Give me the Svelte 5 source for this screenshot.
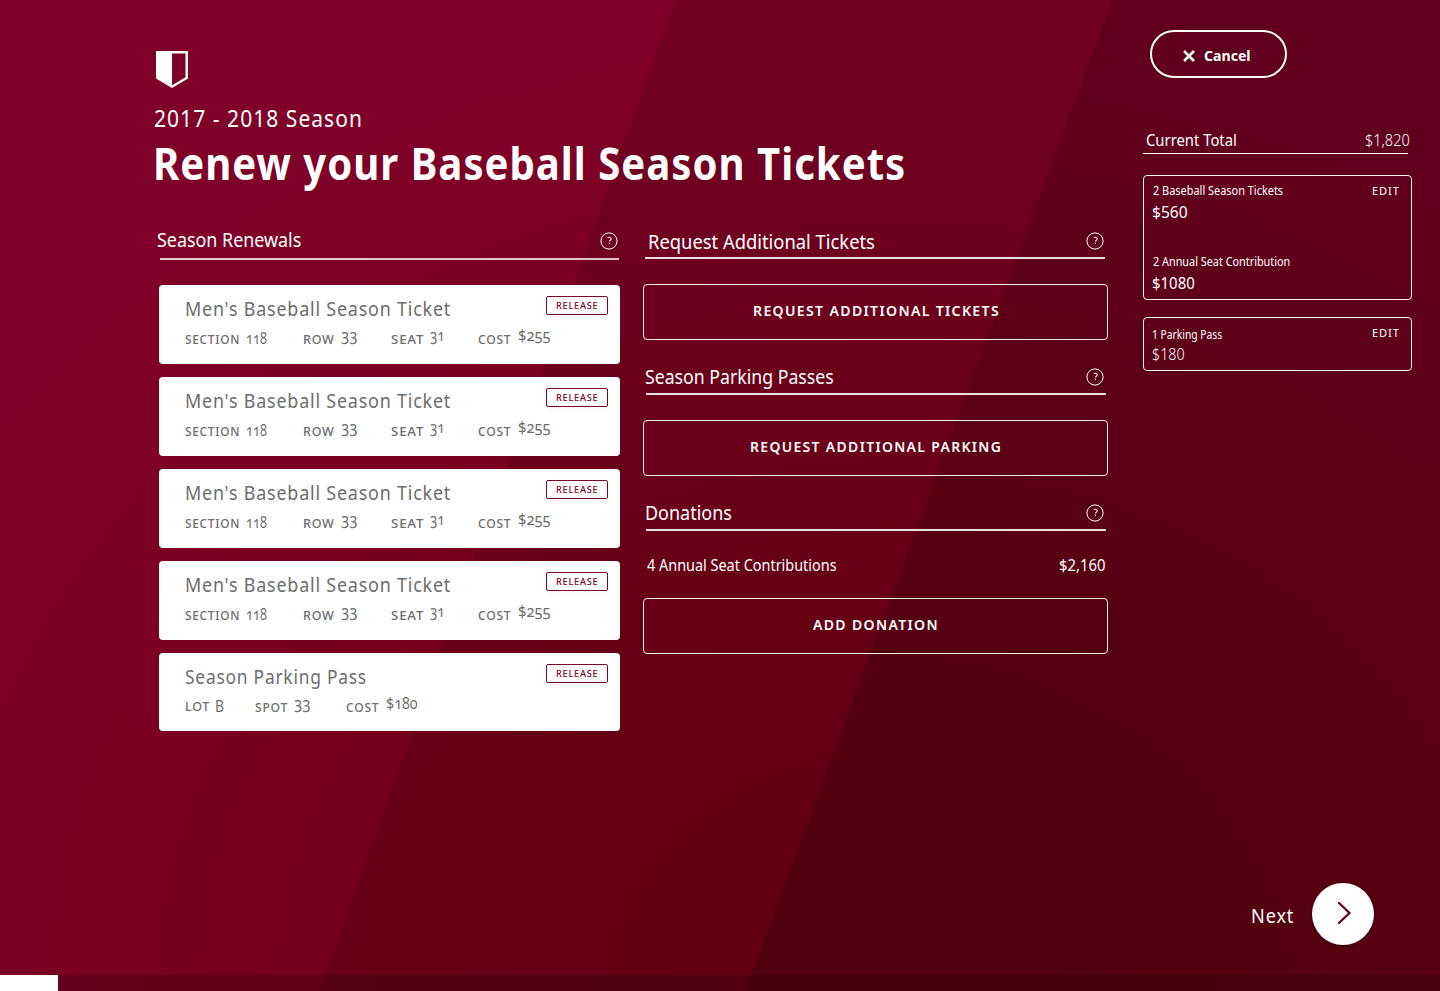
<script>
  const seat = {
    title: "Men's Baseball Season Ticket", width: 264.5,
    fields: [
      { label: 'SECTION', lw: 54, value: '118', vw: 21, raise: 1.2, size: 118 },
      { label: 'ROW', lw: 30.5, value: '33', vw: 16.5, raise: 4, size: 88 },
      { label: 'SEAT', lw: 31.5, value: '31', vw: 15, raise: 4, size: 87 },
      { label: 'COST', lw: 32.5, value: '$255', vw: 32.5, raise: 4, size: 90 }
    ]
  };
  const parking = {
    title: 'Season Parking Pass', width: 181,
    fields: [
      { label: 'LOT', lw: 23.5, value: 'B', vw: 9.2, raise: 0.5, size: 70, lift: true },
      { label: 'SPOT', lw: 32, value: '33', vw: 16.5, raise: 4, size: 91 },
      { label: 'COST', lw: 32.5, value: '$180', vw: 32, raise: 3.6, size: 90 }
    ]
  };
  const cards = [seat, seat, seat, seat, parking];

  // Narrows a line of text to the width of its box.
  function fit(node) {
    const spacing = parseFloat(getComputedStyle(node).letterSpacing) || 0;
    const scale = node.parentNode.clientWidth / (node.offsetWidth - spacing);
    node.style.transform = `scaleX(${scale})`;
  }
</script>

{#snippet t(text, width, kind)}
  <span class="t {kind}" style="width:{width}px"><span class="run" use:fit>{text}</span></span>
{/snippet}

{#snippet help()}
  <svg class="help" width="18" height="18" viewBox="0 0 18 18" fill="none" stroke="#fff">
    <circle cx="9" cy="9" r="8.1" stroke-width="1" />
    <path d="M7.6 5.7c.9-.7 3.6-.6 3.6 1.1 0 1.5-1.7 1.4-1.7 2.7M9.4 10.8v1.2" stroke-width="1.05" />
  </svg>
{/snippet}

<div class="page">
  <svg class="bands" width="1440" height="991" aria-hidden="true">
    <path d="M675 0H1440V991H319Z" fill="#000" fill-opacity=".1" />
    <path d="M1112 0H1440V991H745Z" fill="#000" fill-opacity=".14" />
  </svg>

  <div class="body">
    <main>
      <header>
        <svg class="logo" width="32" height="37" viewBox="0 0 32 37">
          <path d="M0 0H32V27.5L16 37L0 27.5Z" fill="#fff" />
          <path d="M16 2.6H29.5V26.2L16 34.2Z" fill="#7c0027" />
        </svg>
        <div class="season">{@render t('2017 - 2018 Season', 207.5, 'sub')}</div>
        <h1>{@render t('Renew your Baseball Season Tickets', 752, 'title')}</h1>
      </header>

      <div class="columns">
        <section class="renewals">
          <div class="sec first">{@render t('Season Renewals', 144, 'h')}{@render help()}</div>
          {#each cards as card}
            <article class:short={card === parking}>
              <div class="info">
                {@render t(card.title, card.width, 'ct')}
                <div class="fields">
                  {#each card.fields as f}
                    <div class="field" class:lift={f.lift} style="width:{f.size}px">
                      {@render t(f.label, f.lw, 'lab')}
                      <span style="margin-bottom:{f.raise}px">{@render t(f.value, f.vw, 'val')}</span>
                    </div>
                  {/each}
                </div>
              </div>
              <button class="release">{@render t('RELEASE', 41.5, 'rel')}</button>
            </article>
          {/each}
        </section>

        <section class="extras">
          <div class="sec request">{@render t('Request Additional Tickets', 226.5, 'h')}{@render help()}</div>
          <button class="wide">{@render t('REQUEST ADDITIONAL TICKETS', 246, 'btn')}</button>
          <div class="sec">{@render t('Season Parking Passes', 189, 'h')}{@render help()}</div>
          <button class="wide">{@render t('REQUEST ADDITIONAL PARKING', 250.5, 'btn')}</button>
          <div class="sec">{@render t('Donations', 86.5, 'h')}{@render help()}</div>
          <div class="donation">
            {@render t('4 Annual Seat Contributions', 190, 'm')}
            {@render t('$2,160', 46, 'm')}
          </div>
          <button class="wide add">{@render t('ADD DONATION', 124.5, 'btn')}</button>
        </section>
      </div>
    </main>

    <aside>
      <button class="cancel">
        <svg width="12" height="12" viewBox="0 0 12 12" stroke="#fff" stroke-width="2.5"><path d="M1 1L11 11M11 1L1 11" /></svg>
        {@render t('Cancel', 46.5, 'can')}
      </button>
      <div class="total">
        {@render t('Current Total', 91, 'm')}
        {@render t('$1,820', 45, 'm light')}
      </div>
      <div class="box big">
        <div>
          <div class="item">{@render t('2 Baseball Season Tickets', 128.5, 's')}{@render t('$560', 36, 'p')}</div>
          <div class="item">{@render t('2 Annual Seat Contribution', 135.5, 's')}{@render t('$1080', 43, 'p')}</div>
        </div>
        {@render t('EDIT', 27, 'edit')}
      </div>
      <div class="box small">
        <div class="item">{@render t('1 Parking Pass', 70, 's')}{@render t('$180', 33, 'p light')}</div>
        {@render t('EDIT', 27, 'edit')}
      </div>
      <div class="next">
        {@render t('Next', 42, 'nx')}
        <button class="go" aria-label="Next">
          <svg width="16" height="24" viewBox="0 0 16 24" fill="none" stroke="#6a0020" stroke-width="2.4" stroke-linecap="round" stroke-linejoin="round"><path d="M3 2L13.5 12L3 22" /></svg>
        </button>
      </div>
    </aside>
  </div>
  <footer><div class="done"></div></footer>
</div>

<style>
  :global(body) { margin: 0; }
  .page {
    position: relative; width: 1440px; height: 991px; overflow: hidden;
    display: flex; flex-direction: column; color: #fff;
    font-family: 'Noto Sans', sans-serif;
    background: radial-gradient(1150px 1000px at 900px 1000px, #6b0013 0%, #6d0014 15%, #710018 40%, #77001d 58%, #7c0024 80%, #7f0028 100%);
  }
  .bands { position: absolute; left: 0; top: 0; }
  .body { position: relative; flex: 1; display: flex; }
  button { font: inherit; color: inherit; background: none; padding: 0; margin: 0; box-sizing: border-box; }
  h1 { margin: 0; }

  .t { display: block; line-height: 1; flex: none; white-space: nowrap; font-weight: 400; }
  .run { display: inline-block; transform-origin: 0 50%; vertical-align: top; }
  .sub { font-size: 23px; letter-spacing: .05em; }
  .title { font-size: 44px; font-weight: 660; letter-spacing: .025em; }
  .h { font-size: 19px; }
  .ct { font-size: 19.4px; letter-spacing: .045em; color: #6d6d6d; }
  .lab { font-size: 12.6px; letter-spacing: .06em; color: #6d6d6d; font-weight: 500; }
  .val { font-size: 17px; color: #6d6d6d; font-variant-numeric: oldstyle-nums; }
  .rel { font-size: 9.5px; letter-spacing: .08em; color: #7c0027; font-weight: 500; }
  .btn { font-size: 14px; letter-spacing: .095em; font-weight: 560; padding-bottom: 2.4px; }
  .m { font-size: 15.8px; }
  .s { font-size: 12.2px; }
  .p { font-size: 16px; }
  .light { font-weight: 300; }
  .edit { font-size: 11.2px; letter-spacing: .08em; }
  .can { font-size: 15px; font-weight: 750; }
  .nx { font-size: 19.4px; letter-spacing: .05em; padding-top: 4px; }

  main { width: 954px; padding-left: 154px; }
  header { height: 174px; padding-top: 51px; }
  .logo { display: block; margin-left: 2px; }
  .season { padding: 19px 0 0; }
  h1 { padding: 10.8px 0 0; margin-left: -1px; }

  .columns { display: flex; }
  .renewals { width: 461px; padding-left: 5px; }
  .extras { width: 465px; padding-left: 23px; }
  .sec {
    height: 32.5px; margin: 20px 2px 25.5px 3px; display: flex; justify-content: space-between;
    border-bottom: 2px solid rgba(255, 255, 255, .87);
  }
  .sec .t { margin: 8px 0 0 -1px; }
  .sec .help { margin: 7.8px 2px 0 0; }
  .sec.first { margin: 0 1px 25px; height: 33px; border-color: rgba(255, 255, 255, .77); }
  .sec.first .t { margin: 6.3px 0 0 -3px; }
  .sec.first .help { margin: 7px 1px 0 0; }
  .sec.request { margin: 0 3px 26px 2px; height: 32px; }
  .sec.request .t { margin: 8px 0 0 3px; }
  .sec.request .help { margin: 7px 1px 0 0; }

  article {
    height: 79px; margin-bottom: 13px; box-sizing: border-box; padding: 11px 12px 0 25.6px;
    display: flex; justify-content: space-between; align-items: flex-start;
    background: #fff; border-radius: 4px;
  }
  article.short { height: 78px; }
  .info { padding-top: 3px; width: 361px; flex: none; }
  .fields { display: flex; margin-top: 6.6px; height: 24px; }
  .field { display: flex; align-items: flex-end; gap: 7.8px; height: 22px; flex: none; }
  .field.lift { height: 21px; gap: 6.5px; }
  .field .lab { padding-bottom: .6px; }
  .release {
    width: 62px; height: 19px; border: 1.4px solid #7c0027; border-radius: 2px; flex: none;
    display: flex; align-items: center; justify-content: center;
    box-shadow: 0 2px 6px rgba(0, 0, 0, .04);
  }
  .wide {
    width: 465px; height: 56px; border: 1px solid rgba(255, 255, 255, .93); border-radius: 4px;
    display: flex; align-items: center; justify-content: center;
  }
  .extras .request + .wide { margin-top: -1px; }
  .donation { display: flex; justify-content: space-between; padding: 1.5px 3px 24.7px 4px; }

  aside { width: 269px; padding: 30px 0 0 35px; display: flex; flex-direction: column; }
  .cancel {
    width: 137px; height: 48px; margin-left: 7px; border: 2px solid #fff; border-radius: 24px;
    display: flex; align-items: center; padding: 3px 0 0 31px; gap: 9px;
  }
  .total {
    height: 20px; padding-top: 1px; margin: 54px 4px 21px 0; padding-left: 3px; border-bottom: 1px solid #fff;
    display: flex; justify-content: space-between;
  }
  .total .light { margin-right: -2px; }
  .box {
    box-sizing: border-box; border: 1px solid rgba(255, 255, 255, .95); border-radius: 4px;
    padding: 8px 12px 0 8px; display: flex; justify-content: space-between; color: #fff;
  }
  .big { height: 125px; margin-bottom: 17px; }
  .small { height: 54px; }
  .item { height: 71px; }
  .item .s { padding: 1px 0 7px 1px; }
  .small .item { padding-top: 3px; }
  .small .item .s { padding: 0 0 4.5px 0; }
  .edit { padding-top: 1px; }
  .next { margin: auto -5px 30px 0; display: flex; align-items: center; justify-content: flex-end; gap: 19px; padding-right: 43px; }
  .go {
    width: 62.5px; height: 62.5px; border: 0; border-radius: 50%; background: #fff;
    box-shadow: 0 2px 4px rgba(0, 0, 0, .3); display: flex; align-items: center; justify-content: center; padding: 0 0 1px 3px;
  }
  footer { position: relative; height: 16px; background: rgba(0, 0, 0, .17); }
  .done { width: 57.5px; height: 16px; background: #fff; }
</style>
